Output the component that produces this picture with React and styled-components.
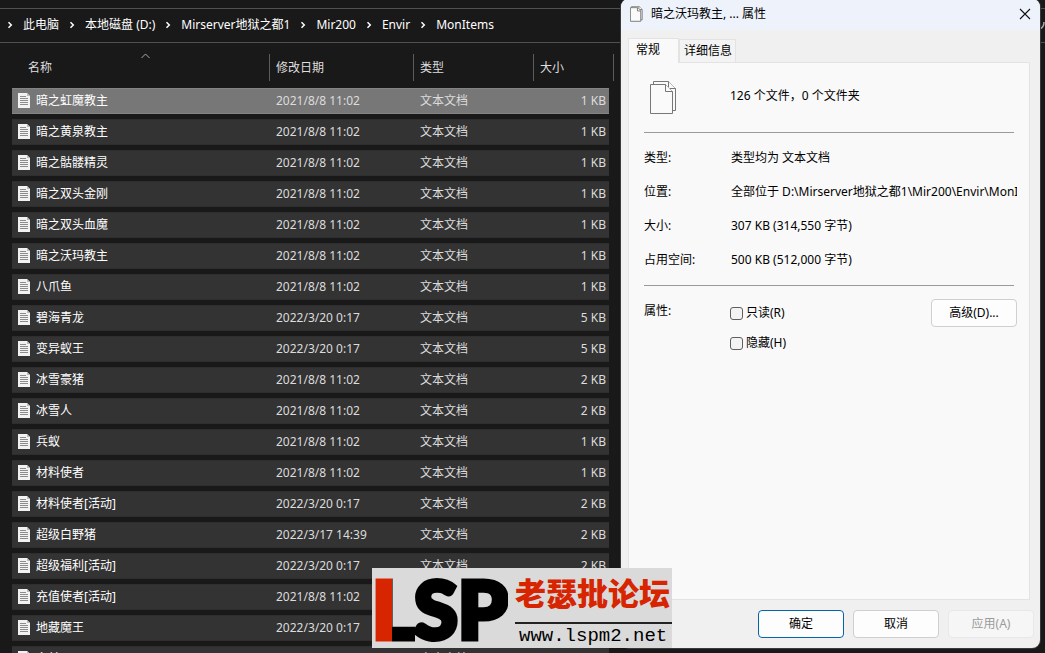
import React from "react";
import styled, { createGlobalStyle, css } from "styled-components";

const Global = createGlobalStyle`
  * { box-sizing: border-box; }
  html, body { margin: 0; height: 100%; background: #191919; }
  body, button, input { font-family: "Noto Sans", "Noto Sans CJK SC", sans-serif; font-size: 12px; line-height: 16px; }
`;

const Desktop = styled.div`
  position: relative;
  height: 100vh;
  overflow: hidden;
  background: #191919;
  color: #e4e4e4;
`;

const Explorer = styled.main`
  display: flex;
  flex-direction: column;
  padding-top: 8px;
`;

const AddressBar = styled.nav`
  display: flex;
  align-items: center;
  justify-content: space-between;
  height: 35px;
  padding-bottom: 2px;
  border-top: 1px solid #505050;
  border-bottom: 1px solid #505050;
`;

const Crumbs = styled.ol`
  display: flex;
  align-items: center;
  margin: 0;
  padding: 0 0 0 7px;
  list-style: none;
`;

const Crumb = styled.li`
  display: flex;
  align-items: center;
  gap: 10px;
  margin-right: 10px;
  white-space: nowrap;
`;

const CrumbLink = styled.a`
  color: #fff;
  text-decoration: none;
`;

const ListPane = styled.div`
  padding: 0 calc(40% + 13px) 0 12px;
`;

const FileTable = styled.table`
  width: 100%;
  table-layout: fixed;
  border-collapse: separate;
  border-spacing: 0 5px;
`;

const Column = styled.col`
  width: ${(p) => (p.$width ? `${p.$width}px` : "auto")};
`;

const HeadCell = styled.th`
  position: relative;
  height: 35px;
  padding: 6px 0 2px;
  font-weight: 400;
  text-align: left;
  color: #dedede;
`;

const HeadLabel = styled.span`
  display: block;
  height: 27px;
  padding-left: ${(p) => p.$indent}px;
  line-height: 27px;
  border-right: ${(p) => (p.$plain ? "0" : "1px solid #5c5c5c")};
`;

const SortMark = styled.svg`
  position: absolute;
  top: 5px;
  left: 50%;
`;

const Cell = styled.td`
  height: 26px;
  padding: 0 0 0 6px;
  white-space: nowrap;
  color: ${(p) => (p.$name ? "#fff" : "#dcdcdc")};
  text-align: ${(p) => (p.$right ? "right" : "left")};
  ${(p) => p.$right && css`padding-right: 3px;`}
`;

const Row = styled.tr`
  ${Cell} {
    background: ${(p) => (p.$selected ? "#777777" : "#333333")};
    border-top: 1px solid ${(p) => (p.$selected ? "#848484" : "#2e2e2e")};
    border-bottom: 1px solid ${(p) => (p.$selected ? "#848484" : "#2e2e2e")};
  }
`;

const FileName = styled.span`
  display: flex;
  align-items: center;
  gap: 6px;
`;

const Dialog = styled.section`
  position: absolute;
  top: -1px;
  right: 5px;
  bottom: 5px;
  width: calc(40% + 1px);
  display: flex;
  flex-direction: column;
  border-radius: 8px;
  overflow: hidden;
  background: #f0f0f0;
  color: #000;
  box-shadow: 0 0 0 1px #3a3a3a;
`;

const TitleBar = styled.header`
  display: flex;
  align-items: center;
  gap: 8px;
  height: 31px;
  padding: 0 9px 2px;
  background: #eef3fb;
`;

const Title = styled.h1`
  flex: 1;
  margin: 0;
  font-size: 12px;
  font-weight: 400;
`;

const CloseButton = styled.button`
  display: flex;
  padding: 0;
  border: 0;
  background: none;
`;

const Tabs = styled.div`
  display: flex;
  align-items: flex-end;
  height: 32px;
  padding: 0 7px;
`;

const Tab = styled.button`
  height: ${(p) => (p.$active ? 25 : 23)}px;
  margin-bottom: ${(p) => (p.$active ? -1 : 0)}px;
  padding: 0 ${(p) => (p.$active ? 18 : 3)}px 0 ${(p) => (p.$active ? 7 : 4)}px;
  ${(p) => p.$active && css`padding-bottom: 3px;`}
  border: 1px solid #e3e3e3;
  border-bottom: 0;
  background: ${(p) => (p.$active ? "#f9f9f9" : "#f3f3f3")};
  color: #000;
  white-space: nowrap;
  z-index: ${(p) => (p.$active ? 1 : 0)};
`;

const Panel = styled.div`
  flex: 1;
  margin: 0 10px 0 7px;
  padding: 18px 12px 0 15px;
  border: 1px solid #e3e3e3;
  background: #f9f9f9;
`;

const Summary = styled.div`
  display: flex;
  gap: 53px;
  height: 51px;
  padding-left: 6px;
`;

const SummaryText = styled.p`
  margin: 0;
  padding-top: 7px;
`;

const Rule = styled.hr`
  height: 1px;
  margin: 0 3px 0 0;
  border: 0;
  background: #9a9a9a;
`;

const Facts = styled.dl`
  display: grid;
  grid-template-columns: 87px minmax(0, 1fr);
  row-gap: 18px;
  margin: 0;
  padding: 17px 0;
`;

const Term = styled.dt`
  white-space: nowrap;
`;

const Value = styled.dd`
  margin: 0;
  overflow: hidden;
  white-space: nowrap;
`;

const Attributes = styled.div`
  display: grid;
  grid-template-columns: 86px 1fr auto;
  align-items: start;
  padding-top: 13px;
`;

const AttributeLabel = styled.span`
  padding-top: 4px;
`;

const Checks = styled.div`
  display: flex;
  flex-direction: column;
  gap: 14px;
  padding-top: 6px;
`;

const CheckLabel = styled.label`
  display: flex;
  align-items: center;
  gap: 3px;
`;

const CheckBox = styled.input`
  appearance: none;
  width: 13px;
  height: 13px;
  margin: 0;
  border: 1px solid #5f5f5f;
  border-radius: 3px;
  background: #f3f3f3;
`;

const Button = styled.button`
  width: 86px;
  height: 28px;
  padding: 0;
  border: 1px solid ${(p) => (p.$primary ? "#0067a8" : "#cfcfcf")};
  border-radius: 4px;
  background: #fdfdfd;
  color: #000;
  &:disabled { color: #9b9b9b; border-color: #e8e8e8; background: #f6f6f6; }
`;

const Footer = styled.footer`
  display: flex;
  justify-content: flex-end;
  gap: 9px;
  padding: 10px 6px;
`;

const Banner = styled.aside`
  position: absolute;
  left: 372px;
  bottom: 5px;
  display: flex;
  justify-content: space-between;
  width: 300px;
  height: 80px;
  background: #dadada;
  color: #000;
`;

const Wordmark = styled.strong`
  font: 900 80px/80px Lato, sans-serif;
  background: linear-gradient(90deg, #d62500 20px, #000 20px);
  background-clip: text;
  color: #0000;
  -webkit-text-stroke: 5px #0000;
`;

const BannerText = styled.div`
  display: flex;
  flex-direction: column;
  width: 157px;
`;

const ForumName = styled.span`
  height: 56px;
  border-bottom: 2px solid #222;
  font: 900 31px/48px "Noto Sans CJK SC", sans-serif;
  color: #d62500;
  white-space: nowrap;
`;

const ForumSite = styled.span`
  padding-left: 4px;
  font: 400 19px/24px "Liberation Mono", monospace;
`;

const Chevron = () => (
  <svg width="6" height="8" viewBox="0 0 6 8" fill="none" stroke="#fff" strokeWidth="1.5" aria-hidden="true">
    <path d="M1.5 1.2 4.3 4 1.5 6.8" />
  </svg>
);

const TextFileIcon = () => (
  <svg width="12" height="16" viewBox="0 0 12 16" aria-hidden="true">
    <path d="M0 0h9l3 3v12H0z" fill="#f2f2f2" />
    <path d="M9 0v3h3z" fill="#bcbcbc" />
    <path d="M2 3.5h6M2 5.5h8M2 7.5h8M2 9.5h8M2 11.5h8" stroke="#8c8c8c" strokeWidth="1" />
  </svg>
);

const PagesIcon = ({ width, height }) => (
  <svg width={width} height={height} viewBox="0 0 27 34" fill="#fafafa" stroke="#777" strokeWidth={width < 20 ? 2 : 1} aria-hidden="true">
    <path d="M3.5 3.5v-3h15l7 7v22h-3" />
    <path d="M18.5.5v7h7" />
    <path d="M.5 3.5h15l7 7v22H.5z" />
    <path d="M15.5 3.5v7h7" />
  </svg>
);

const crumbs = ["此电脑", "本地磁盘 (D:)", "Mirserver地狱之都1", "Mir200", "Envir", "MonItems"];

const early = "2021/8/8 11:02";
const late = "2022/3/20 0:17";

const files = [
  ["暗之虹魔教主", early, 1],
  ["暗之黄泉教主", early, 1],
  ["暗之骷髅精灵", early, 1],
  ["暗之双头金刚", early, 1],
  ["暗之双头血魔", early, 1],
  ["暗之沃玛教主", early, 1],
  ["八爪鱼", early, 1],
  ["碧海青龙", late, 5],
  ["变异蚁王", late, 5],
  ["冰雪豪猪", early, 2],
  ["冰雪人", early, 2],
  ["兵蚁", early, 1],
  ["材料使者", early, 1],
  ["材料使者[活动]", late, 2],
  ["超级白野猪", "2022/3/17 14:39", 2],
  ["超级福利[活动]", late, 2],
  ["充值使者[活动]", early, 2],
  ["地藏魔王", late, 2],
  ["多兹", early, 1],
];

const facts = [
  ["类型:", "类型均为 文本文档"],
  ["位置:", "全部位于 D:\\Mirserver地狱之都1\\Mir200\\Envir\\MonItems"],
  ["大小:", "307 KB (314,550 字节)"],
  ["占用空间:", "500 KB (512,000 字节)"],
];

export default function App() {
  return (
    <Desktop>
      <Global />
      <Explorer>
        <AddressBar>
          <Crumbs>
            {crumbs.map((name) => (
              <Crumb key={name}>
                <Chevron />
                <CrumbLink href="#">{name}</CrumbLink>
              </Crumb>
            ))}
          </Crumbs>
          <svg width="5" height="12" viewBox="0 0 5 12" fill="none" stroke="#aaa" strokeWidth="1.5" aria-hidden="true">
            <path d="M0 10C2 9 4 7 4 3" />
          </svg>
        </AddressBar>
        <ListPane>
          <FileTable>
            <colgroup>
              <Column />
              <Column $width={144} />
              <Column $width={120} />
              <Column $width={75} />
              <Column $width={5} />
            </colgroup>
            <thead>
              <tr>
                <HeadCell>
                  <HeadLabel $indent={16}>名称</HeadLabel>
                  <SortMark width="9" height="6" viewBox="0 0 9 6" fill="none" stroke="#aaa">
                    <path d="M.5 5 4.5 1l4 4" />
                  </SortMark>
                </HeadCell>
                <HeadCell><HeadLabel $indent={6}>修改日期</HeadLabel></HeadCell>
                <HeadCell><HeadLabel $indent={6}>类型</HeadLabel></HeadCell>
                <HeadCell><HeadLabel $indent={6} $plain>大小</HeadLabel></HeadCell>
                <HeadCell as="td"><HeadLabel $indent={0} /></HeadCell>
              </tr>
            </thead>
            <tbody>
              {files.map(([name, date, size], i) => (
                <Row key={name} $selected={i === 0}>
                  <Cell $name>
                    <FileName><TextFileIcon />{name}</FileName>
                  </Cell>
                  <Cell>{date}</Cell>
                  <Cell>文本文档</Cell>
                  <Cell $right>{size} KB</Cell>
                </Row>
              ))}
            </tbody>
          </FileTable>
        </ListPane>
      </Explorer>

      <Dialog role="dialog" aria-labelledby="dialog-title">
        <TitleBar>
          <PagesIcon width={13} height={16} />
          <Title id="dialog-title">暗之沃玛教主, ... 属性</Title>
          <CloseButton aria-label="关闭">
            <svg width="12" height="12" viewBox="0 0 12 12" stroke="#111" strokeWidth="1.1" aria-hidden="true">
              <path d="M1 1l10 10M11 1 1 11" />
            </svg>
          </CloseButton>
        </TitleBar>
        <Tabs role="tablist">
          <Tab role="tab" aria-selected="true" $active>常规</Tab>
          <Tab role="tab" aria-selected="false">详细信息</Tab>
        </Tabs>
        <Panel role="tabpanel">
          <Summary>
            <PagesIcon width={27} height={34} />
            <SummaryText>126 个文件，0 个文件夹</SummaryText>
          </Summary>
          <Rule />
          <Facts>
            {facts.map(([term, value]) => (
              <React.Fragment key={term}>
                <Term>{term}</Term>
                <Value>{value}</Value>
              </React.Fragment>
            ))}
          </Facts>
          <Rule />
          <Attributes>
            <AttributeLabel>属性:</AttributeLabel>
            <Checks>
              <CheckLabel><CheckBox type="checkbox" />只读(R)</CheckLabel>
              <CheckLabel><CheckBox type="checkbox" />隐藏(H)</CheckLabel>
            </Checks>
            <Button>高级(D)...</Button>
          </Attributes>
        </Panel>
        <Footer>
          <Button $primary>确定</Button>
          <Button>取消</Button>
          <Button disabled>应用(A)</Button>
        </Footer>
      </Dialog>

      <Banner>
        <Wordmark>LSP</Wordmark>
        <BannerText>
          <ForumName>老瑟批论坛</ForumName>
          <ForumSite>www.lspm2.net</ForumSite>
        </BannerText>
      </Banner>
    </Desktop>
  );
}
